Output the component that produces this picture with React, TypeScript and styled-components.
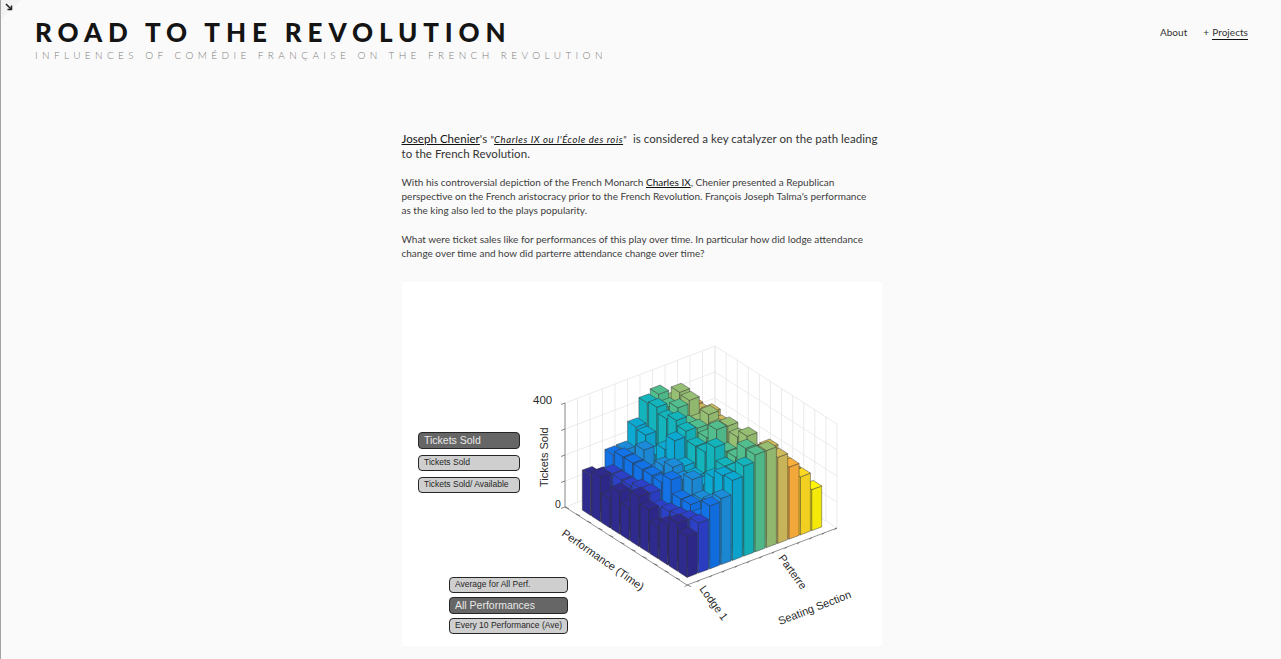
import React from "react";
import styled, { createGlobalStyle } from "styled-components";

const GlobalStyle = createGlobalStyle`
  html, body {
    margin: 0;
    padding: 0;
    background: #fafafa;
    overflow: hidden;
  }
`;

const Page = styled.div`
  min-height: 659px;
  box-sizing: border-box;
  border-left: 1px solid #a3a3a3;
  position: relative;
  font-family: "Lato", "Liberation Sans", sans-serif;
  color: #222;
`;

const CornerFold = styled.div`
  position: absolute;
  left: 0;
  top: 0;
  width: 0;
  height: 0;
  border-top: 20px solid #f3f3f3;
  border-right: 20px solid transparent;
`;

const CornerIcon = styled.svg`
  position: absolute;
  left: 4px;
  top: 3px;
  width: 8px;
  height: 8px;
`;

const Header = styled.header`
  display: flex;
  justify-content: space-between;
  align-items: flex-start;
  padding: 15px 33px 0 34px;
  height: 132px;
  box-sizing: border-box;
`;

const Brand = styled.div`
  display: flex;
  flex-direction: column;
`;

const Title = styled.h1`
  margin: 0;
  font-size: 26px;
  line-height: 34px;
  font-weight: 900;
  letter-spacing: 5.9px;
  color: #141414;
  white-space: nowrap;
`;

const Subtitle = styled.div`
  font-size: 10px;
  line-height: 13px;
  font-weight: 300;
  letter-spacing: 4.4px;
  color: #7d7d7d;
  white-space: nowrap;
`;

const Nav = styled.nav`
  display: flex;
  gap: 16px;
  padding-top: 11px;
  font-size: 10px;
  line-height: 13px;
  letter-spacing: 0.05px;
  color: #333;
`;

const NavItem = styled.span``;

const NavActive = styled.span`
  display: inline-block;
  margin-left: 3px;
  border-bottom: 1.5px solid #111;
`;

const Main = styled.main`
  width: 480px;
  margin: 0 auto;
  position: relative;
  left: 0.5px;
`;

const Lead = styled.p`
  margin: 0 0 14px;
  font-size: 11.5px;
  line-height: 14px;
  letter-spacing: 0.05px;
  color: #333;
`;

const Para = styled.p`
  margin: 0 0 15px;
  max-width: 474px;
  font-size: 10px;
  line-height: 14px;
  color: #3d3d3d;
`;

const TextLink = styled.span`
  color: #111;
  text-decoration: underline;
  text-underline-offset: 1px;
`;

const Quote = styled.span`
  font-style: italic;
  font-size: 9.5px;
  letter-spacing: 0.6px;
`;

const Figure = styled.figure`
  margin: 22px 0 0;
  width: 480px;
  height: 364px;
  background: #fff;
  position: relative;
`;

const Plot = styled.svg`
  position: absolute;
  left: 0;
  top: 0;
  width: 480px;
  height: 364px;
`;

const ControlStack = styled.div<{ $left: number; $top: number; $width: number; $gap: number }>`
  position: absolute;
  left: ${(p) => p.$left}px;
  top: ${(p) => p.$top}px;
  width: ${(p) => p.$width}px;
  display: flex;
  flex-direction: column;
  gap: ${(p) => p.$gap}px;
`;

const PlotButton = styled.div<{ $active?: boolean }>`
  box-sizing: border-box;
  height: ${(p) => (p.$active ? 17 : 16)}px;
  border: 1.5px solid #262626;
  border-radius: 4px;
  background: ${(p) => (p.$active ? "#666" : "#cfcfcf")};
  color: ${(p) => (p.$active ? "#e8e8e8" : "#1f1f1f")};
  font-family: "Liberation Sans", Arial, sans-serif;
  font-size: ${(p) => (p.$active ? 10.5 : 8.5)}px;
  line-height: ${(p) => (p.$active ? 14 : 13)}px;
  padding-left: 5.5px;
  white-space: nowrap;
`;

const AxisLabel = styled.text<{ $size?: number }>`
  font-family: "Liberation Sans", Arial, sans-serif;
  font-size: ${(p) => p.$size ?? 11}px;
  fill: #2a2a2a;
`;

type Pt = { x: number; y: number };
type Basis = { o: Pt; u: Pt; v: Pt };

// card origin on the page is 402,282
const AXES: Basis = { o: { x: 285, y: 303 }, u: { x: -122, y: -78 }, v: { x: 150, y: -57 } };
const BARS: Basis = { o: { x: 285, y: 296 }, u: { x: -106, y: -68 }, v: { x: 136, y: -51 } };
const AXIS_H = 104;

const project = (b: Basis, u: number, v: number, z = 0): Pt => ({
  x: b.o.x + b.u.x * u + b.v.x * v,
  y: b.o.y + b.u.y * u + b.v.y * v - z,
});

const pts = (list: Pt[]) => list.map((p) => `${p.x.toFixed(1)},${p.y.toFixed(1)}`).join(" ");

const ROWS = 11;
const COLS = 12;
const COLORS = [
  "#2f2a8e", "#2c40c8", "#1272e6", "#1c8cda", "#0ca9d3", "#14b4bd",
  "#52be8e", "#97bf74", "#cfbb5c", "#fcae3c", "#fbd922", "#fff30a",
];
const PROFILE = [41, 50, 63, 66, 80, 90, 97, 97, 86, 72, 58, 41];
const LODGE_ROW = [41, 48, 40, 32, 43, 50, 32, 42, 29, 45, 40];

const shade = (hex: string, f: number) => {
  const n = parseInt(hex.slice(1), 16);
  const c = [(n >> 16) & 255, (n >> 8) & 255, n & 255].map((x) => Math.round(x * f));
  return `rgb(${c[0]},${c[1]},${c[2]})`;
};

const noise = (i: number, j: number) => {
  const s = Math.sin(i * 12.9898 + j * 78.233) * 43758.5453;
  return s - Math.floor(s);
};

const heightOf = (i: number, j: number) => {
  if (j === 0) return LODGE_ROW[i];
  if (i === 0) return PROFILE[j];
  const spread = j < 5 ? 0.34 : 0.2;
  return PROFILE[j] * (1.04 - spread + spread * noise(i, j));
};

const bars: React.ReactNode[] = [];
for (let i = ROWS - 1; i >= 0; i--) {
  for (let j = COLS - 1; j >= 0; j--) {
    const gap = 0.06;
    const u0 = (i + gap) / ROWS;
    const u1 = (i + 1 - gap) / ROWS;
    const v0 = (j + gap) / COLS;
    const v1 = (j + 1 - gap) / COLS;
    const h = heightOf(i, j);
    const fill = COLORS[j];
    bars.push(
      <g key={`${i}-${j}`} stroke="#333" strokeOpacity={0.75} strokeWidth={0.6} strokeLinejoin="round">
        <polygon
          points={pts([project(BARS, u1, v0), project(BARS, u0, v0), project(BARS, u0, v0, h), project(BARS, u1, v0, h)])}
          fill={fill}
        />
        <polygon
          points={pts([project(BARS, u0, v0), project(BARS, u0, v1), project(BARS, u0, v1, h), project(BARS, u0, v0, h)])}
          fill={shade(fill, 0.96)}
        />
        <polygon
          points={pts([project(BARS, u0, v0, h), project(BARS, u0, v1, h), project(BARS, u1, v1, h), project(BARS, u1, v0, h)])}
          fill={fill}
        />
      </g>
    );
  }
}

const Walls = () => {
  const lines: React.ReactNode[] = [];
  const line = (key: string, a: Pt, b: Pt) =>
    lines.push(<line key={key} x1={a.x} y1={a.y} x2={b.x} y2={b.y} stroke="#e6e6e6" strokeWidth={0.8} />);
  for (let k = 0; k <= 4; k++) {
    const z = (AXIS_H / 4) * k;
    line(`l${k}`, project(AXES, 1, 0, z), project(AXES, 1, 1, z));
    line(`r${k}`, project(AXES, 1, 1, z), project(AXES, 0, 1, z));
  }
  for (let k = 0; k <= COLS; k++) {
    line(`lv${k}`, project(AXES, 1, k / COLS), project(AXES, 1, k / COLS, AXIS_H));
  }
  for (let k = 0; k <= ROWS; k++) {
    line(`rv${k}`, project(AXES, k / ROWS, 1), project(AXES, k / ROWS, 1, AXIS_H));
  }
  return <g>{lines}</g>;
};

const Axes = () => {
  const marks: React.ReactNode[] = [];
  for (let k = 0; k <= 4; k++) {
    const p = project(AXES, 1, 0, (AXIS_H / 4) * k);
    marks.push(<line key={`z${k}`} x1={p.x} y1={p.y} x2={p.x - 4} y2={p.y + 1.5} stroke="#555" strokeWidth={0.7} />);
  }
  for (let k = 0; k <= ROWS; k++) {
    const p = project(AXES, k / ROWS, 0);
    marks.push(<line key={`u${k}`} x1={p.x} y1={p.y} x2={p.x + 4} y2={p.y + 1.6} stroke="#555" strokeWidth={0.7} />);
  }
  for (let k = 0; k <= COLS; k++) {
    const p = project(AXES, 0, k / COLS);
    marks.push(<line key={`v${k}`} x1={p.x} y1={p.y} x2={p.x - 2.5} y2={p.y + 1.8} stroke="#555" strokeWidth={0.7} />);
  }
  const a = project(AXES, 1, 0);
  const b = project(AXES, 0, 0);
  const c = project(AXES, 0, 1);
  const top = project(AXES, 1, 0, AXIS_H);
  return (
    <g>
      <polyline points={pts([top, a, b, c])} fill="none" stroke="#777" strokeWidth={0.8} />
      {marks}
    </g>
  );
};

const App = () => (
  <>
    <GlobalStyle />
    <Page>
      <CornerFold />
      <CornerIcon viewBox="0 0 8 8">
        <path d="M1 1 L6.5 6.5 M6.5 2.5 V6.5 H2.5" fill="none" stroke="#222" strokeWidth={1.5} />
      </CornerIcon>
      <Header>
        <Brand>
          <Title>ROAD TO THE REVOLUTION</Title>
          <Subtitle>INFLUENCES OF COMÉDIE FRANÇAISE ON THE FRENCH REVOLUTION</Subtitle>
        </Brand>
        <Nav>
          <NavItem>About</NavItem>
          <NavItem>
            +<NavActive>Projects</NavActive>
          </NavItem>
        </Nav>
      </Header>
      <Main>
        <Lead>
          <TextLink>Joseph Chenier</TextLink>'s{" "}
          <Quote>
            "<TextLink>Charles IX ou l'École des rois</TextLink>"
          </Quote>
          &nbsp; is considered a key catalyzer on the path leading to the French Revolution.
        </Lead>
        <Para>
          With his controversial depiction of the French Monarch <TextLink>Charles IX</TextLink>, Chenier presented a
          Republican perspective on the French aristocracy prior to the French Revolution. François Joseph Talma's
          performance as the king also led to the plays popularity.
        </Para>
        <Para>
          What were ticket sales like for performances of this play over time. In particular how did lodge attendance
          change over time and how did parterre attendance change over time?
        </Para>
        <Figure>
          <Plot viewBox="0 0 480 364">
            <Walls />
            <Axes />
            {bars}
            <AxisLabel x={131} y={122} $size={11.5}>400</AxisLabel>
            <AxisLabel x={153} y={226} $size={10.5}>0</AxisLabel>
            <AxisLabel x={0} y={0} transform="translate(146 205) rotate(-90)">Tickets Sold</AxisLabel>
            <AxisLabel x={0} y={0} transform="translate(159 253) rotate(35)">Performance (Time)</AxisLabel>
            <AxisLabel x={0} y={0} transform="translate(297 307) rotate(54)">Lodge 1</AxisLabel>
            <AxisLabel x={0} y={0} transform="translate(376 276) rotate(54)">Parterre</AxisLabel>
            <AxisLabel x={0} y={0} transform="translate(378 343) rotate(-21)">Seating Section</AxisLabel>
          </Plot>
          <ControlStack $left={16} $top={150} $width={102} $gap={6}>
            <PlotButton $active>Tickets Sold</PlotButton>
            <PlotButton>Tickets Sold</PlotButton>
            <PlotButton>Tickets Sold/ Available</PlotButton>
          </ControlStack>
          <ControlStack $left={47} $top={295} $width={119} $gap={4}>
            <PlotButton>Average for All Perf.</PlotButton>
            <PlotButton $active>All Performances</PlotButton>
            <PlotButton>Every 10 Performance (Ave)</PlotButton>
          </ControlStack>
        </Figure>
      </Main>
    </Page>
  </>
);

export default App;
